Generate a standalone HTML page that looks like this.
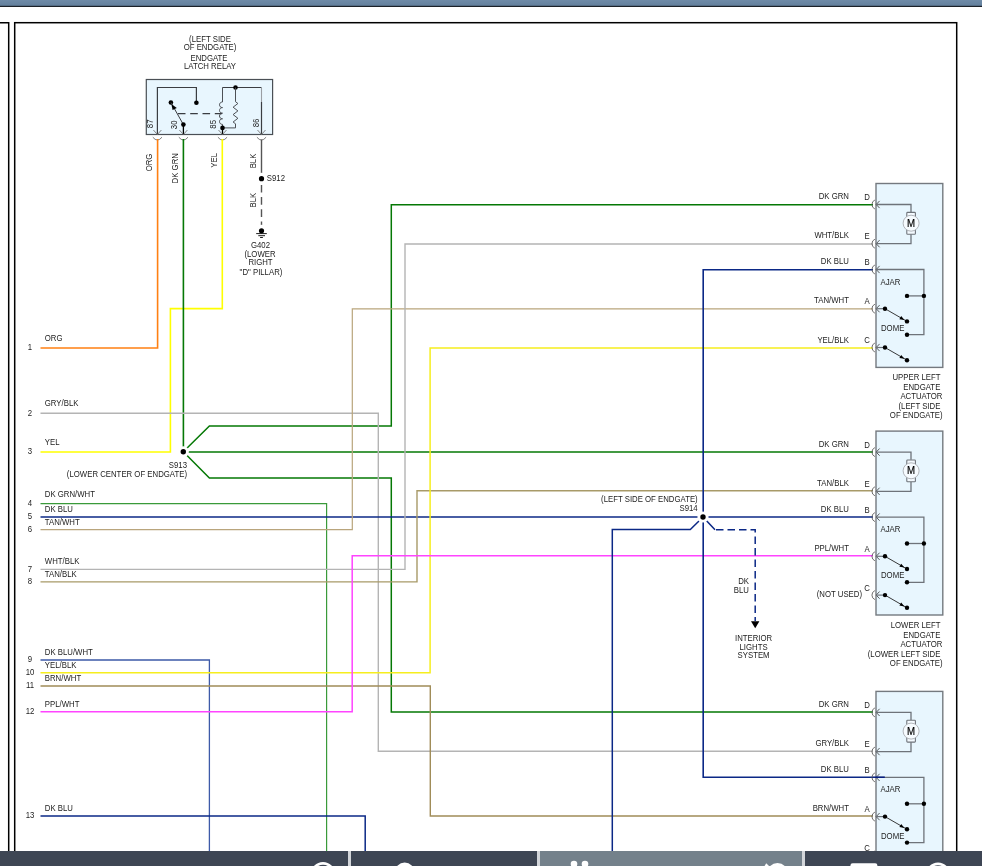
<!DOCTYPE html>
<html><head><meta charset="utf-8"><style>html,body{margin:0;padding:0;background:#fff;width:982px;height:866px;overflow:hidden;position:relative}</style></head>
<body>
<svg width="982" height="866" viewBox="0 0 982 866" style="position:absolute;left:0;top:0;will-change:transform;font-family:'Liberation Sans',sans-serif">
<defs><linearGradient id="tb" x1="0" y1="0" x2="0" y2="1"><stop offset="0" stop-color="#6f8ba8"/><stop offset="1" stop-color="#63809d"/></linearGradient></defs>
<rect x="0" y="0" width="982" height="866" fill="#fff"/>
<rect x="0" y="0" width="982" height="6" fill="url(#tb)"/>
<rect x="0" y="5.8" width="982" height="1.2" fill="#1b2129"/>
<path d="M0,22.7 L8.7,22.7 L8.7,870" fill="none" stroke="#000" stroke-width="1.5" />
<rect x="14.7" y="22.7" width="942" height="900" fill="none" stroke="#000" stroke-width="1.5"/>
<rect x="146.3" y="79.5" width="126.3" height="55" fill="#e8f6fe" stroke="#4a4f55" stroke-width="1.2"/>
<path d="M157.4,134.5 L157.4,87.5 L196.4,87.5 L196.4,102.8" fill="none" stroke="#3a3d42" stroke-width="1.2" />
<circle cx="196.4" cy="102.8" r="2.3" fill="#000"/>
<circle cx="170.9" cy="102.5" r="2.3" fill="#000"/>
<path d="M183.4,124.6 L170.9,102.5" fill="none" stroke="#3a3d42" stroke-width="1.0" />
<path d="M171.3,103.9 L176.8,107.9 L172.6,110.1 Z" fill="#000"/>
<circle cx="183.4" cy="124.6" r="2.3" fill="#000"/>
<path d="M183.4,124.6 L183.4,134.5" fill="none" stroke="#000" stroke-width="1.3" />
<path d="M177.9,113.7 L222,113.7" fill="none" stroke="#3a3d42" stroke-width="1.2" stroke-dasharray="7.6 4.7"/>
<path d="M222.5,134.5 L222.5,127.9" fill="none" stroke="#000" stroke-width="1.3" />
<path d="M222.5,87.5 L222.5,102 C218.5,102 218.5,107.6 222.5,107.6 C218.5,107.6 218.5,113.2 222.5,113.2 C218.5,113.2 218.5,118.8 222.5,118.8 C218.5,118.8 218.5,124.4 222.5,124.4 L222.5,127.9" fill="none" stroke="#45484d" stroke-width="0.95"/>
<path d="M222.5,87.5 L261.5,87.5" fill="none" stroke="#3a3d42" stroke-width="1.2" />
<path d="M261.5,87.5 L261.5,102" fill="none" stroke="#9a9ea3" stroke-width="1.1" />
<path d="M261.5,102 L261.5,134.5" fill="none" stroke="#3a3d42" stroke-width="1.2" />
<circle cx="235.5" cy="87.5" r="2.3" fill="#000"/>
<path d="M235.5,87.5 L235.5,101.7 L237.9,103.5 L233.1,107.2 L237.9,110.9 L233.1,114.6 L237.9,118.3 L233.1,122 L235.5,123.8 L235.5,127.9 L222.5,127.9" fill="none" stroke="#45484d" stroke-width="0.95"/>
<circle cx="222.5" cy="127.9" r="2.3" fill="#000"/>
<path d="M153.4,130 L157.4,134.5 L161.4,130" fill="none" stroke="#7a7a7a" stroke-width="0.9" />
<path d="M152.8,137.2 Q157.4,142.9 162.0,137.2" fill="none" stroke="#777" stroke-width="0.95"/>
<path d="M179.4,130 L183.4,134.5 L187.4,130" fill="none" stroke="#7a7a7a" stroke-width="0.9" />
<path d="M178.8,137.2 Q183.4,142.9 188.0,137.2" fill="none" stroke="#777" stroke-width="0.95"/>
<path d="M218.5,130 L222.5,134.5 L226.5,130" fill="none" stroke="#7a7a7a" stroke-width="0.9" />
<path d="M217.9,137.2 Q222.5,142.9 227.1,137.2" fill="none" stroke="#777" stroke-width="0.95"/>
<path d="M257.5,130 L261.5,134.5 L265.5,130" fill="none" stroke="#7a7a7a" stroke-width="0.9" />
<path d="M256.9,137.2 Q261.5,142.9 266.1,137.2" fill="none" stroke="#777" stroke-width="0.95"/>
<text transform="translate(153.3,119.5) rotate(-90) scale(1,1.05)" text-anchor="end" font-size="7.8" fill="#1c1c1c">87</text>
<text transform="translate(177,120.5) rotate(-90) scale(1,1.05)" text-anchor="end" font-size="7.8" fill="#1c1c1c">30</text>
<text transform="translate(215.8,120) rotate(-90) scale(1,1.05)" text-anchor="end" font-size="7.8" fill="#1c1c1c">85</text>
<text transform="translate(259.2,118.7) rotate(-90) scale(1,1.05)" text-anchor="end" font-size="7.8" fill="#1c1c1c">86</text>
<text transform="translate(210,42) scale(1,1.05)" text-anchor="middle" font-size="7.8" fill="#1c1c1c" >(LEFT SIDE</text>
<text transform="translate(210,49.6) scale(1,1.05)" text-anchor="middle" font-size="7.8" fill="#1c1c1c" >OF ENDGATE)</text>
<text transform="translate(209,60.8) scale(1,1.05)" text-anchor="middle" font-size="7.8" fill="#1c1c1c" >ENDGATE</text>
<text transform="translate(210,68.7) scale(1,1.05)" text-anchor="middle" font-size="7.8" fill="#1c1c1c" >LATCH RELAY</text>
<path d="M261.5,139.5 L261.5,178.7" fill="none" stroke="#555" stroke-width="1.4" />
<path d="M261.5,178.7 L261.5,230.8" fill="none" stroke="#555" stroke-width="1.4" stroke-dasharray="7.6 4.6" stroke-dashoffset="-6.2"/>
<circle cx="261.5" cy="178.7" r="6" fill="#fff"/><circle cx="261.5" cy="230.8" r="6" fill="#fff"/>
<circle cx="261.5" cy="178.7" r="2.6" fill="#000"/>
<text transform="translate(266.8,181) scale(1,1.05)" text-anchor="start" font-size="7.8" fill="#1c1c1c" >S912</text>
<circle cx="261.5" cy="230.8" r="2.6" fill="#000"/>
<path d="M256.2,233.6 L266.8,233.6" fill="none" stroke="#000" stroke-width="0.9" />
<path d="M258.3,235.7 L265,235.7" fill="none" stroke="#000" stroke-width="0.9" />
<path d="M260.1,237.5 L262.9,237.5" fill="none" stroke="#000" stroke-width="0.9" />
<text transform="translate(260.5,247.8) scale(1,1.05)" text-anchor="middle" font-size="7.8" fill="#1c1c1c" >G402</text>
<text transform="translate(260,257) scale(1,1.05)" text-anchor="middle" font-size="7.8" fill="#1c1c1c" >(LOWER</text>
<text transform="translate(260.5,264.9) scale(1,1.05)" text-anchor="middle" font-size="7.8" fill="#1c1c1c" >RIGHT</text>
<text transform="translate(261,275.2) scale(1,1.05)" text-anchor="middle" font-size="7.8" fill="#1c1c1c" >"D" PILLAR)</text>
<text transform="translate(151.9,153.6) rotate(-90) scale(1,1.05)" text-anchor="end" font-size="7.8" fill="#1c1c1c">ORG</text>
<text transform="translate(178.2,153.1) rotate(-90) scale(1,1.05)" text-anchor="end" font-size="7.8" fill="#1c1c1c">DK GRN</text>
<text transform="translate(216.7,153) rotate(-90) scale(1,1.05)" text-anchor="end" font-size="7.8" fill="#1c1c1c">YEL</text>
<text transform="translate(256.2,153.6) rotate(-90) scale(1,1.05)" text-anchor="end" font-size="7.8" fill="#1c1c1c">BLK</text>
<text transform="translate(255.6,192.7) rotate(-90) scale(1,1.05)" text-anchor="end" font-size="7.8" fill="#1c1c1c">BLK</text>
<path d="M157.6,139 L157.6,348 L40.5,348" fill="none" stroke="#ff8012" stroke-width="1.6" />
<path d="M222.3,139 L222.3,308.6 L170.4,308.6 L170.4,452 L40.5,452" fill="none" stroke="#ffff00" stroke-width="1.6" />
<path d="M183.4,139 L183.4,452" fill="none" stroke="#057805" stroke-width="1.6" />
<path d="M183.3,451.8 L209.4,425.9 L391.3,425.9 L391.3,204.7 L873,204.7" fill="none" stroke="#057805" stroke-width="1.5" />
<path d="M183.3,452 L873,452" fill="none" stroke="#057805" stroke-width="1.5" />
<path d="M183.3,451.8 L209.4,478 L391.3,478 L391.3,712 L873,712" fill="none" stroke="#057805" stroke-width="1.5" />
<circle cx="183.3" cy="451.8" r="5.6" fill="#fff"/>
<circle cx="183.3" cy="451.8" r="2.7" fill="#000"/>
<text transform="translate(187,467.6) scale(1,1.05)" text-anchor="end" font-size="7.8" fill="#1c1c1c" >S913</text>
<text transform="translate(187,477) scale(1,1.05)" text-anchor="end" font-size="7.8" fill="#1c1c1c" >(LOWER CENTER OF ENDGATE)</text>
<text transform="translate(30,349.9) scale(1,1.05)" text-anchor="middle" font-size="7.8" fill="#1c1c1c" >1</text>
<text transform="translate(44.8,340.7) scale(1,1.05)" text-anchor="start" font-size="7.8" fill="#1c1c1c" >ORG</text>
<text transform="translate(30,415.5) scale(1,1.05)" text-anchor="middle" font-size="7.8" fill="#1c1c1c" >2</text>
<text transform="translate(44.8,406.3) scale(1,1.05)" text-anchor="start" font-size="7.8" fill="#1c1c1c" >GRY/BLK</text>
<text transform="translate(30,454.2) scale(1,1.05)" text-anchor="middle" font-size="7.8" fill="#1c1c1c" >3</text>
<text transform="translate(44.8,445) scale(1,1.05)" text-anchor="start" font-size="7.8" fill="#1c1c1c" >YEL</text>
<text transform="translate(30,505.9) scale(1,1.05)" text-anchor="middle" font-size="7.8" fill="#1c1c1c" >4</text>
<text transform="translate(44.8,496.7) scale(1,1.05)" text-anchor="start" font-size="7.8" fill="#1c1c1c" >DK GRN/WHT</text>
<text transform="translate(30,519.2) scale(1,1.05)" text-anchor="middle" font-size="7.8" fill="#1c1c1c" >5</text>
<text transform="translate(44.8,511.8) scale(1,1.05)" text-anchor="start" font-size="7.8" fill="#1c1c1c" >DK BLU</text>
<text transform="translate(30,531.8000000000001) scale(1,1.05)" text-anchor="middle" font-size="7.8" fill="#1c1c1c" >6</text>
<text transform="translate(44.8,524.9) scale(1,1.05)" text-anchor="start" font-size="7.8" fill="#1c1c1c" >TAN/WHT</text>
<text transform="translate(30,571.6) scale(1,1.05)" text-anchor="middle" font-size="7.8" fill="#1c1c1c" >7</text>
<text transform="translate(44.8,564.1999999999999) scale(1,1.05)" text-anchor="start" font-size="7.8" fill="#1c1c1c" >WHT/BLK</text>
<text transform="translate(30,584.1) scale(1,1.05)" text-anchor="middle" font-size="7.8" fill="#1c1c1c" >8</text>
<text transform="translate(44.8,576.6999999999999) scale(1,1.05)" text-anchor="start" font-size="7.8" fill="#1c1c1c" >TAN/BLK</text>
<text transform="translate(30,662.2) scale(1,1.05)" text-anchor="middle" font-size="7.8" fill="#1c1c1c" >9</text>
<text transform="translate(44.8,654.8) scale(1,1.05)" text-anchor="start" font-size="7.8" fill="#1c1c1c" >DK BLU/WHT</text>
<text transform="translate(30,675.0) scale(1,1.05)" text-anchor="middle" font-size="7.8" fill="#1c1c1c" >10</text>
<text transform="translate(44.8,667.5999999999999) scale(1,1.05)" text-anchor="start" font-size="7.8" fill="#1c1c1c" >YEL/BLK</text>
<text transform="translate(30,688.2) scale(1,1.05)" text-anchor="middle" font-size="7.8" fill="#1c1c1c" >11</text>
<text transform="translate(44.8,680.8) scale(1,1.05)" text-anchor="start" font-size="7.8" fill="#1c1c1c" >BRN/WHT</text>
<text transform="translate(30,714.0) scale(1,1.05)" text-anchor="middle" font-size="7.8" fill="#1c1c1c" >12</text>
<text transform="translate(44.8,706.5999999999999) scale(1,1.05)" text-anchor="start" font-size="7.8" fill="#1c1c1c" >PPL/WHT</text>
<text transform="translate(30,818.2) scale(1,1.05)" text-anchor="middle" font-size="7.8" fill="#1c1c1c" >13</text>
<text transform="translate(44.8,810.8) scale(1,1.05)" text-anchor="start" font-size="7.8" fill="#1c1c1c" >DK BLU</text>
<path d="M40.5,413.3 L378.3,413.3 L378.3,751.2 L873,751.2" fill="none" stroke="#b4b4b4" stroke-width="1.4" />
<path d="M40.5,503.7 L326.6,503.7 L326.6,870" fill="none" stroke="#3a9a3a" stroke-width="1.2" />
<path d="M40.5,517 L703,517 L873,517" fill="none" stroke="#0b2886" stroke-width="1.6" />
<path d="M40.5,529.6 L352.3,529.6 L352.3,308.8 L873,308.8" fill="none" stroke="#b9a57c" stroke-width="1.2" />
<path d="M40.5,569.4 L405,569.4 L405,244 L873,244" fill="none" stroke="#b4b4b4" stroke-width="1.4" />
<path d="M40.5,581.9 L417,581.9 L417,490.8 L873,490.8" fill="none" stroke="#a89a68" stroke-width="1.4" />
<path d="M40.5,660 L209.4,660 L209.4,870" fill="none" stroke="#3d5aa8" stroke-width="1.3" />
<path d="M40.5,672.8 L430.1,672.8 L430.1,348 L873,348" fill="none" stroke="#f6ee1e" stroke-width="1.5" />
<path d="M40.5,686 L430.3,686 L430.3,816 L873,816" fill="none" stroke="#a08c58" stroke-width="1.4" />
<path d="M40.5,711.8 L352.2,711.8 L352.2,555.7 L873,555.7" fill="none" stroke="#ff44ff" stroke-width="1.5" />
<path d="M40.5,816 L365.2,816 L365.2,870" fill="none" stroke="#0b2886" stroke-width="1.5" />
<path d="M873,269.8 L703.2,269.8 L703.2,777.2 L873,777.2" fill="none" stroke="#0b2886" stroke-width="1.6" />
<path d="M699,521 L690.3,529.6 L612.3,529.6 L612.3,870" fill="none" stroke="#0b2886" stroke-width="1.5" />
<path d="M703,517 L715,529.7" fill="none" stroke="#0b2886" stroke-width="1.5" />
<path d="M715,529.7 L755.2,529.7 L755.2,621" fill="none" stroke="#0b2886" stroke-width="1.5" stroke-dasharray="7.5 4" stroke-dashoffset="-1"/>
<path d="M751,621.2 L759.4,621.2 L755.2,628.2 Z" fill="#000"/>
<circle cx="703" cy="517" r="5.6" fill="#fff"/>
<circle cx="703" cy="517" r="2.7" fill="#000"/>
<text transform="translate(697.7,501.9) scale(1,1.05)" text-anchor="end" font-size="7.8" fill="#1c1c1c" >(LEFT SIDE OF ENDGATE)</text>
<text transform="translate(697.7,511.2) scale(1,1.05)" text-anchor="end" font-size="7.8" fill="#1c1c1c" >S914</text>
<text transform="translate(749,583.9) scale(1,1.05)" text-anchor="end" font-size="7.8" fill="#1c1c1c" >DK</text>
<text transform="translate(749,592.6) scale(1,1.05)" text-anchor="end" font-size="7.8" fill="#1c1c1c" >BLU</text>
<text transform="translate(753.6,641) scale(1,1.05)" text-anchor="middle" font-size="7.8" fill="#1c1c1c" >INTERIOR</text>
<text transform="translate(753.6,649.5) scale(1,1.05)" text-anchor="middle" font-size="7.8" fill="#1c1c1c" >LIGHTS</text>
<text transform="translate(753.6,658) scale(1,1.05)" text-anchor="middle" font-size="7.8" fill="#1c1c1c" >SYSTEM</text>
<rect x="876" y="183.5" width="66.8" height="183.89999999999998" fill="#e8f6fe" stroke="#74797f" stroke-width="1.4"/>
<path d="M874.9,200.0 A4.9,4.9 0 0 0 874.9,209.0" fill="none" stroke="#555" stroke-width="0.85"/>
<path d="M879.6,200.9 L876.2,204.5 L879.6,208.1" fill="none" stroke="#333" stroke-width="0.8" />
<path d="M874.9,239.2 A4.9,4.9 0 0 0 874.9,248.2" fill="none" stroke="#555" stroke-width="0.85"/>
<path d="M879.6,240.1 L876.2,243.7 L879.6,247.29999999999998" fill="none" stroke="#333" stroke-width="0.8" />
<path d="M874.9,265.0 A4.9,4.9 0 0 0 874.9,274.0" fill="none" stroke="#555" stroke-width="0.85"/>
<path d="M879.6,265.9 L876.2,269.5 L879.6,273.1" fill="none" stroke="#333" stroke-width="0.8" />
<path d="M874.9,304.2 A4.9,4.9 0 0 0 874.9,313.2" fill="none" stroke="#555" stroke-width="0.85"/>
<path d="M879.6,305.09999999999997 L876.2,308.7 L879.6,312.3" fill="none" stroke="#333" stroke-width="0.8" />
<path d="M874.9,343.0 A4.9,4.9 0 0 0 874.9,352.0" fill="none" stroke="#555" stroke-width="0.85"/>
<path d="M879.6,343.9 L876.2,347.5 L879.6,351.1" fill="none" stroke="#333" stroke-width="0.8" />
<path d="M876,204.5 L911,204.5 L911,212.1" fill="none" stroke="#6e737a" stroke-width="1.3" />
<path d="M876,243.7 L911,243.7 L911,234.29999999999998" fill="none" stroke="#6e737a" stroke-width="1.3" />
<rect x="906.8" y="212.4" width="8.6" height="5.4" rx="0.8" fill="#f4faff" stroke="#6e737a" stroke-width="1.1"/>
<rect x="906.8" y="229.6" width="8.6" height="4.6" rx="0.8" fill="#f4faff" stroke="#6e737a" stroke-width="1.1"/>
<circle cx="911.1" cy="223.2" r="8.0" fill="#f6fbff" stroke="#a9adb2" stroke-width="0.9"/>
<text transform="translate(911.1,226.7) scale(1,1.05)" text-anchor="middle" font-size="9.7" fill="#000" stroke="#000" stroke-width="0.18">M</text>
<path d="M876,269.5 L923.9,269.5 L923.9,334.7 L907,334.7" fill="none" stroke="#6e737a" stroke-width="1.3" />
<path d="M907,295.9 L923.9,295.9" fill="none" stroke="#6e737a" stroke-width="1.3" />
<circle cx="907" cy="295.9" r="2.2" fill="#000"/>
<circle cx="923.9" cy="295.9" r="2.2" fill="#000"/>
<circle cx="907" cy="334.7" r="2.2" fill="#000"/>
<path d="M876,308.7 L885,308.7" fill="none" stroke="#6e737a" stroke-width="1.2" />
<path d="M885,308.7 L907,321.4" fill="none" stroke="#222" stroke-width="0.9" />
<path d="M904.4,320.0 L901.2,316.09999999999997 L899.4,319.2 Z" fill="#000"/>
<circle cx="885" cy="308.7" r="2.2" fill="#000"/>
<circle cx="907" cy="321.4" r="2.2" fill="#000"/>
<path d="M876,347.5 L885,347.5" fill="none" stroke="#6e737a" stroke-width="1.2" />
<path d="M885,347.5 L907,360.2" fill="none" stroke="#222" stroke-width="0.9" />
<path d="M904.4,358.8 L901.2,354.9 L899.4,358.0 Z" fill="#000"/>
<circle cx="885" cy="347.5" r="2.2" fill="#000"/>
<circle cx="907" cy="360.2" r="2.2" fill="#000"/>
<text transform="translate(880.5,284.5) scale(1,1.05)" text-anchor="start" font-size="7.8" fill="#1c1c1c" >AJAR</text>
<text transform="translate(881,330.7) scale(1,1.05)" text-anchor="start" font-size="7.8" fill="#1c1c1c" >DOME</text>
<text transform="translate(867,199.9) scale(1,1.05)" text-anchor="middle" font-size="7.8" fill="#1c1c1c" >D</text>
<text transform="translate(867,239.1) scale(1,1.05)" text-anchor="middle" font-size="7.8" fill="#1c1c1c" >E</text>
<text transform="translate(867,264.9) scale(1,1.05)" text-anchor="middle" font-size="7.8" fill="#1c1c1c" >B</text>
<text transform="translate(867,304.09999999999997) scale(1,1.05)" text-anchor="middle" font-size="7.8" fill="#1c1c1c" >A</text>
<text transform="translate(867,342.9) scale(1,1.05)" text-anchor="middle" font-size="7.8" fill="#1c1c1c" >C</text>
<text transform="translate(849,199.0) scale(1,1.05)" text-anchor="end" font-size="7.8" fill="#1c1c1c" >DK GRN</text>
<text transform="translate(849,238.2) scale(1,1.05)" text-anchor="end" font-size="7.8" fill="#1c1c1c" >WHT/BLK</text>
<text transform="translate(849,264.0) scale(1,1.05)" text-anchor="end" font-size="7.8" fill="#1c1c1c" >DK BLU</text>
<text transform="translate(849,303.2) scale(1,1.05)" text-anchor="end" font-size="7.8" fill="#1c1c1c" >TAN/WHT</text>
<text transform="translate(942.5,380.4) scale(1,1.05)" text-anchor="end" font-size="7.8" fill="#1c1c1c" xml:space="preserve">UPPER LEFT </text>
<text transform="translate(942.5,389.9) scale(1,1.05)" text-anchor="end" font-size="7.8" fill="#1c1c1c" xml:space="preserve">ENDGATE </text>
<text transform="translate(942.5,399.4) scale(1,1.05)" text-anchor="end" font-size="7.8" fill="#1c1c1c" xml:space="preserve">ACTUATOR</text>
<text transform="translate(942.5,408.9) scale(1,1.05)" text-anchor="end" font-size="7.8" fill="#1c1c1c" xml:space="preserve">(LEFT SIDE </text>
<text transform="translate(942.5,418.4) scale(1,1.05)" text-anchor="end" font-size="7.8" fill="#1c1c1c" xml:space="preserve">OF ENDGATE)</text>
<text transform="translate(849,342.5) scale(1,1.05)" text-anchor="end" font-size="7.8" fill="#1c1c1c" >YEL/BLK</text>
<rect x="876" y="431.1" width="66.8" height="183.89999999999998" fill="#e8f6fe" stroke="#74797f" stroke-width="1.4"/>
<path d="M874.9,447.6 A4.9,4.9 0 0 0 874.9,456.6" fill="none" stroke="#555" stroke-width="0.85"/>
<path d="M879.6,448.5 L876.2,452.1 L879.6,455.70000000000005" fill="none" stroke="#333" stroke-width="0.8" />
<path d="M874.9,486.8 A4.9,4.9 0 0 0 874.9,495.8" fill="none" stroke="#555" stroke-width="0.85"/>
<path d="M879.6,487.7 L876.2,491.3 L879.6,494.90000000000003" fill="none" stroke="#333" stroke-width="0.8" />
<path d="M874.9,512.6 A4.9,4.9 0 0 0 874.9,521.6" fill="none" stroke="#555" stroke-width="0.85"/>
<path d="M879.6,513.5 L876.2,517.1 L879.6,520.7" fill="none" stroke="#333" stroke-width="0.8" />
<path d="M874.9,551.8000000000001 A4.9,4.9 0 0 0 874.9,560.8000000000001" fill="none" stroke="#555" stroke-width="0.85"/>
<path d="M879.6,552.7 L876.2,556.3000000000001 L879.6,559.9000000000001" fill="none" stroke="#333" stroke-width="0.8" />
<path d="M874.9,590.6 A4.9,4.9 0 0 0 874.9,599.6" fill="none" stroke="#555" stroke-width="0.85"/>
<path d="M879.6,591.5 L876.2,595.1 L879.6,598.7" fill="none" stroke="#333" stroke-width="0.8" />
<path d="M876,452.1 L911,452.1 L911,459.70000000000005" fill="none" stroke="#6e737a" stroke-width="1.3" />
<path d="M876,491.3 L911,491.3 L911,481.90000000000003" fill="none" stroke="#6e737a" stroke-width="1.3" />
<rect x="906.8" y="460.0" width="8.6" height="5.4" rx="0.8" fill="#f4faff" stroke="#6e737a" stroke-width="1.1"/>
<rect x="906.8" y="477.2" width="8.6" height="4.6" rx="0.8" fill="#f4faff" stroke="#6e737a" stroke-width="1.1"/>
<circle cx="911.1" cy="470.8" r="8.0" fill="#f6fbff" stroke="#a9adb2" stroke-width="0.9"/>
<text transform="translate(911.1,474.3) scale(1,1.05)" text-anchor="middle" font-size="9.7" fill="#000" stroke="#000" stroke-width="0.18">M</text>
<path d="M876,517.1 L923.9,517.1 L923.9,582.3000000000001 L907,582.3000000000001" fill="none" stroke="#6e737a" stroke-width="1.3" />
<path d="M907,543.5000000000001 L923.9,543.5000000000001" fill="none" stroke="#6e737a" stroke-width="1.3" />
<circle cx="907" cy="543.5000000000001" r="2.2" fill="#000"/>
<circle cx="923.9" cy="543.5000000000001" r="2.2" fill="#000"/>
<circle cx="907" cy="582.3000000000001" r="2.2" fill="#000"/>
<path d="M876,556.3000000000001 L885,556.3000000000001" fill="none" stroke="#6e737a" stroke-width="1.2" />
<path d="M885,556.3000000000001 L907,569.0000000000001" fill="none" stroke="#222" stroke-width="0.9" />
<path d="M904.4,567.6 L901.2,563.7 L899.4,566.8000000000001 Z" fill="#000"/>
<circle cx="885" cy="556.3000000000001" r="2.2" fill="#000"/>
<circle cx="907" cy="569.0000000000001" r="2.2" fill="#000"/>
<path d="M876,595.1 L885,595.1" fill="none" stroke="#6e737a" stroke-width="1.2" />
<path d="M885,595.1 L907,607.8000000000001" fill="none" stroke="#222" stroke-width="0.9" />
<path d="M904.4,606.4 L901.2,602.5 L899.4,605.6 Z" fill="#000"/>
<circle cx="885" cy="595.1" r="2.2" fill="#000"/>
<circle cx="907" cy="607.8000000000001" r="2.2" fill="#000"/>
<text transform="translate(880.5,532.1) scale(1,1.05)" text-anchor="start" font-size="7.8" fill="#1c1c1c" >AJAR</text>
<text transform="translate(881,578.3000000000001) scale(1,1.05)" text-anchor="start" font-size="7.8" fill="#1c1c1c" >DOME</text>
<text transform="translate(867,447.5) scale(1,1.05)" text-anchor="middle" font-size="7.8" fill="#1c1c1c" >D</text>
<text transform="translate(867,486.7) scale(1,1.05)" text-anchor="middle" font-size="7.8" fill="#1c1c1c" >E</text>
<text transform="translate(867,512.5) scale(1,1.05)" text-anchor="middle" font-size="7.8" fill="#1c1c1c" >B</text>
<text transform="translate(867,551.7) scale(1,1.05)" text-anchor="middle" font-size="7.8" fill="#1c1c1c" >A</text>
<text transform="translate(867,590.5) scale(1,1.05)" text-anchor="middle" font-size="7.8" fill="#1c1c1c" >C</text>
<text transform="translate(849,446.6) scale(1,1.05)" text-anchor="end" font-size="7.8" fill="#1c1c1c" >DK GRN</text>
<text transform="translate(849,485.8) scale(1,1.05)" text-anchor="end" font-size="7.8" fill="#1c1c1c" >TAN/BLK</text>
<text transform="translate(849,511.6) scale(1,1.05)" text-anchor="end" font-size="7.8" fill="#1c1c1c" >DK BLU</text>
<text transform="translate(849,550.8000000000001) scale(1,1.05)" text-anchor="end" font-size="7.8" fill="#1c1c1c" >PPL/WHT</text>
<text transform="translate(862,596.7) scale(1,1.05)" text-anchor="end" font-size="7.8" fill="#1c1c1c" >(NOT USED)</text>
<text transform="translate(942.5,628.0) scale(1,1.05)" text-anchor="end" font-size="7.8" fill="#1c1c1c" xml:space="preserve">LOWER LEFT </text>
<text transform="translate(942.5,637.5) scale(1,1.05)" text-anchor="end" font-size="7.8" fill="#1c1c1c" xml:space="preserve">ENDGATE </text>
<text transform="translate(942.5,647.0) scale(1,1.05)" text-anchor="end" font-size="7.8" fill="#1c1c1c" xml:space="preserve">ACTUATOR</text>
<text transform="translate(942.5,656.5) scale(1,1.05)" text-anchor="end" font-size="7.8" fill="#1c1c1c" xml:space="preserve">(LOWER LEFT SIDE </text>
<text transform="translate(942.5,666.0) scale(1,1.05)" text-anchor="end" font-size="7.8" fill="#1c1c1c" xml:space="preserve">OF ENDGATE)</text>
<rect x="876" y="691.4" width="66.8" height="183.89999999999998" fill="#e8f6fe" stroke="#74797f" stroke-width="1.4"/>
<path d="M874.9,707.9 A4.9,4.9 0 0 0 874.9,716.9" fill="none" stroke="#555" stroke-width="0.85"/>
<path d="M879.6,708.8 L876.2,712.4 L879.6,716.0" fill="none" stroke="#333" stroke-width="0.8" />
<path d="M874.9,747.1 A4.9,4.9 0 0 0 874.9,756.1" fill="none" stroke="#555" stroke-width="0.85"/>
<path d="M879.6,748.0 L876.2,751.6 L879.6,755.2" fill="none" stroke="#333" stroke-width="0.8" />
<path d="M874.9,772.9 A4.9,4.9 0 0 0 874.9,781.9" fill="none" stroke="#555" stroke-width="0.85"/>
<path d="M879.6,773.8 L876.2,777.4 L879.6,781.0" fill="none" stroke="#333" stroke-width="0.8" />
<path d="M874.9,812.1 A4.9,4.9 0 0 0 874.9,821.1" fill="none" stroke="#555" stroke-width="0.85"/>
<path d="M879.6,813.0 L876.2,816.6 L879.6,820.2" fill="none" stroke="#333" stroke-width="0.8" />
<path d="M874.9,850.9 A4.9,4.9 0 0 0 874.9,859.9" fill="none" stroke="#555" stroke-width="0.85"/>
<path d="M879.6,851.8 L876.2,855.4 L879.6,859.0" fill="none" stroke="#333" stroke-width="0.8" />
<path d="M876,712.4 L911,712.4 L911,720.0" fill="none" stroke="#6e737a" stroke-width="1.3" />
<path d="M876,751.6 L911,751.6 L911,742.2" fill="none" stroke="#6e737a" stroke-width="1.3" />
<rect x="906.8" y="720.3" width="8.6" height="5.4" rx="0.8" fill="#f4faff" stroke="#6e737a" stroke-width="1.1"/>
<rect x="906.8" y="737.5" width="8.6" height="4.6" rx="0.8" fill="#f4faff" stroke="#6e737a" stroke-width="1.1"/>
<circle cx="911.1" cy="731.1" r="8.0" fill="#f6fbff" stroke="#a9adb2" stroke-width="0.9"/>
<text transform="translate(911.1,734.6) scale(1,1.05)" text-anchor="middle" font-size="9.7" fill="#000" stroke="#000" stroke-width="0.18">M</text>
<path d="M876,777.4 L923.9,777.4 L923.9,842.6 L907,842.6" fill="none" stroke="#6e737a" stroke-width="1.3" />
<path d="M907,803.8000000000001 L923.9,803.8000000000001" fill="none" stroke="#6e737a" stroke-width="1.3" />
<circle cx="907" cy="803.8000000000001" r="2.2" fill="#000"/>
<circle cx="923.9" cy="803.8000000000001" r="2.2" fill="#000"/>
<circle cx="907" cy="842.6" r="2.2" fill="#000"/>
<path d="M876,816.6 L885,816.6" fill="none" stroke="#6e737a" stroke-width="1.2" />
<path d="M885,816.6 L907,829.3000000000001" fill="none" stroke="#222" stroke-width="0.9" />
<path d="M904.4,827.9 L901.2,824.0 L899.4,827.1 Z" fill="#000"/>
<circle cx="885" cy="816.6" r="2.2" fill="#000"/>
<circle cx="907" cy="829.3000000000001" r="2.2" fill="#000"/>
<path d="M876,855.4 L885,855.4" fill="none" stroke="#6e737a" stroke-width="1.2" />
<path d="M885,855.4 L907,868.1" fill="none" stroke="#222" stroke-width="0.9" />
<path d="M904.4,866.6999999999999 L901.2,862.8 L899.4,865.9 Z" fill="#000"/>
<circle cx="885" cy="855.4" r="2.2" fill="#000"/>
<circle cx="907" cy="868.1" r="2.2" fill="#000"/>
<text transform="translate(880.5,792.4) scale(1,1.05)" text-anchor="start" font-size="7.8" fill="#1c1c1c" >AJAR</text>
<text transform="translate(881,838.6) scale(1,1.05)" text-anchor="start" font-size="7.8" fill="#1c1c1c" >DOME</text>
<text transform="translate(867,707.8) scale(1,1.05)" text-anchor="middle" font-size="7.8" fill="#1c1c1c" >D</text>
<text transform="translate(867,747.0) scale(1,1.05)" text-anchor="middle" font-size="7.8" fill="#1c1c1c" >E</text>
<text transform="translate(867,772.8) scale(1,1.05)" text-anchor="middle" font-size="7.8" fill="#1c1c1c" >B</text>
<text transform="translate(867,812.0) scale(1,1.05)" text-anchor="middle" font-size="7.8" fill="#1c1c1c" >A</text>
<text transform="translate(867,850.8) scale(1,1.05)" text-anchor="middle" font-size="7.8" fill="#1c1c1c" >C</text>
<text transform="translate(849,706.9) scale(1,1.05)" text-anchor="end" font-size="7.8" fill="#1c1c1c" >DK GRN</text>
<text transform="translate(849,746.1) scale(1,1.05)" text-anchor="end" font-size="7.8" fill="#1c1c1c" >GRY/BLK</text>
<text transform="translate(849,771.9) scale(1,1.05)" text-anchor="end" font-size="7.8" fill="#1c1c1c" >DK BLU</text>
<text transform="translate(849,811.1) scale(1,1.05)" text-anchor="end" font-size="7.8" fill="#1c1c1c" >BRN/WHT</text>
<path d="M873,777.2 L884.8,777.2" fill="none" stroke="#001a80" stroke-width="1.5" />
<rect x="0" y="851" width="982" height="15" fill="#3e4654"/>
<rect x="348" y="851" width="3" height="15" fill="#d3d6da"/>
<rect x="537" y="851" width="3" height="15" fill="#d3d6da"/>
<rect x="540" y="851" width="262" height="15" fill="#74818b"/>
<rect x="802" y="851" width="3" height="15" fill="#d3d6da"/>
<circle cx="323" cy="874" r="10.7" fill="none" stroke="#fff" stroke-width="2.8"/>
<circle cx="404.7" cy="872.5" r="9.9" fill="#fff"/>
<circle cx="574" cy="864.1" r="3.3" fill="#fff"/><circle cx="585" cy="864.1" r="3.3" fill="#fff"/>
<circle cx="777.5" cy="873.2" r="10.3" fill="#fff"/>
<path d="M764.6,866 L766.2,863.2 L769,866 Z" fill="#fff"/>
<rect x="850.4" y="863.2" width="27" height="9" rx="2.2" fill="#fff"/>
<circle cx="938" cy="874.5" r="10.7" fill="none" stroke="#fff" stroke-width="2.8"/>
</svg>
</body></html>
